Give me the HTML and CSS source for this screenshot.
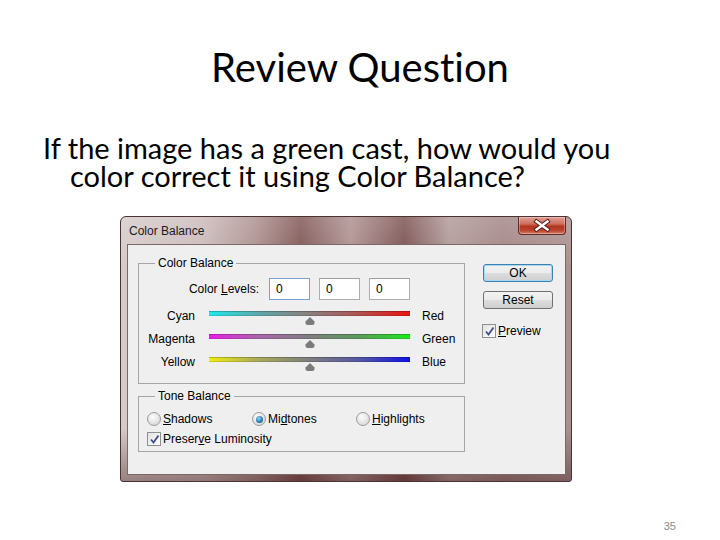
FILE: index.html
```html
<!DOCTYPE html>
<html lang="en">
<head>
  <meta charset="UTF-8">
  <meta name="viewport" content="width=device-width, initial-scale=1.0">
  <title>Review Question</title>
  <link rel="stylesheet" href="styles.css">
</head>
<body>
<div class="slide">
  <!-- Slide heading -->
  <h1 class="slide-title">Review Question</h1>
  <p class="question">If the image has a green cast, how would you color correct it using Color Balance?</p>

  <!-- Color Balance dialog -->
  <div class="dialog">
    <div class="titlebar">
      <span class="caption">Color Balance</span>
      <span class="close-btn">
        <svg width="46" height="17" viewBox="0 0 46 17">
          <path d="M17.5 4.5 L28.5 12.5 M28.5 4.5 L17.5 12.5" stroke="#5a1a14" stroke-width="4.4" stroke-linecap="square"/>
          <path d="M17.5 4.5 L28.5 12.5 M28.5 4.5 L17.5 12.5" stroke="#ffffff" stroke-width="2.4" stroke-linecap="square"/>
        </svg>
      </span>
    </div>

    <div class="client">
      <div class="groups">
        <fieldset class="group color-group">
          <legend>Color Balance</legend>
          <div class="levels">
            <span class="levels-label">Color <u>L</u>evels:</span>
            <input class="field focused" type="text" value="0" readonly>
            <input class="field" type="text" value="0" readonly>
            <input class="field" type="text" value="0" readonly>
          </div>

          <div class="slider-row">
            <span class="from">Cyan</span>
            <div class="slider">
              <div class="track cyan-red"></div>
              <svg class="thumb" width="10" height="8" viewBox="0 0 10 8"><path d="M5 0 L9.5 4.5 Q10 8 7 8 H3 Q0 8 0.5 4.5 Z" fill="#7b7b7b"/></svg>
            </div>
            <span class="to">Red</span>
          </div>
          <div class="slider-row">
            <span class="from">Magenta</span>
            <div class="slider">
              <div class="track magenta-green"></div>
              <svg class="thumb" width="10" height="8" viewBox="0 0 10 8"><path d="M5 0 L9.5 4.5 Q10 8 7 8 H3 Q0 8 0.5 4.5 Z" fill="#7b7b7b"/></svg>
            </div>
            <span class="to">Green</span>
          </div>
          <div class="slider-row">
            <span class="from">Yellow</span>
            <div class="slider">
              <div class="track yellow-blue"></div>
              <svg class="thumb" width="10" height="8" viewBox="0 0 10 8"><path d="M5 0 L9.5 4.5 Q10 8 7 8 H3 Q0 8 0.5 4.5 Z" fill="#7b7b7b"/></svg>
            </div>
            <span class="to">Blue</span>
          </div>
        </fieldset>

        <fieldset class="group tone-group">
          <legend>Tone Balance</legend>
          <div class="radios">
            <span class="option"><span class="radio"></span><span><u>S</u>hadows</span></span>
            <span class="option"><span class="radio on"></span><span>Mi<u>d</u>tones</span></span>
            <span class="option"><span class="radio"></span><span><u>H</u>ighlights</span></span>
          </div>
          <span class="option">
            <span class="check"><svg width="11" height="11" viewBox="0 0 11 11"><path d="M2 5.5 L4.5 8.5 L9.5 1.5" fill="none" stroke="#3d4f8a" stroke-width="1.8"/></svg></span>
            <span>Preser<u>v</u>e Luminosity</span>
          </span>
        </fieldset>
      </div>

      <div class="side">
        <button class="btn default">OK</button>
        <button class="btn">Reset</button>
        <span class="option preview">
          <span class="check"><svg width="11" height="11" viewBox="0 0 11 11"><path d="M2 5.5 L4.5 8.5 L9.5 1.5" fill="none" stroke="#3d4f8a" stroke-width="1.8"/></svg></span>
          <span><u>P</u>review</span>
        </span>
      </div>
    </div>
  </div>

  <div class="page-num">35</div>
</div>
</body>
</html>
```

FILE: styles.css
```css
body {
    margin: 0;
    padding: 0;
    background: #ffffff;
}

/* slide */
.slide {
    width: 720px;
    height: 540px;
    overflow: hidden;
    font-family: Lato, "Open Sans", sans-serif;
    font-variant-ligatures: none;
    color: #000;
}

.slide-title {
    margin: 0;
    padding-top: 43px;
    font-size: 40px;
    font-weight: 400;
    line-height: 48px;
    text-align: center;
}

.question {
    margin: 43px 0 0 0;
    padding: 0 50px 0 70px;
    text-indent: -27px;
    font-size: 29px;
    line-height: 28px;
}

/* dialog window */
.dialog {
    box-sizing: border-box;
    width: 452px;
    margin: 26px 0 0 120px;
    padding: 0 5px 6px 6px;
    border: 1px solid #4a3333;
    border-radius: 6px 6px 3px 3px;
    font-family: "Liberation Sans", Arial, sans-serif;
    font-size: 12px;
    color: #000;
    background:
        linear-gradient(180deg, rgba(255,255,255,0.18) 0%, rgba(0,0,0,0) 20%, rgba(0,0,0,0) 80%, rgba(60,20,20,0.4) 100%),
        linear-gradient(90deg, #d6caca 0%, #cbbaba 18%, #ab8e8e 30%, #7e5554 40%, #ad9090 51%, #7a5050 63%, #b09898 73%, #a28484 85%, #ab9090 100%);
}

.titlebar {
    height: 27px;
    display: flex;
    justify-content: space-between;
    align-items: flex-start;
    padding-left: 2px;
}

.caption {
    margin-top: 7px;
    line-height: 14px;
    color: #1a1a1a;
}

.close-btn {
    display: block;
    width: 46px;
    height: 17px;
    border: 1px solid #5e2a24;
    border-top: none;
    border-radius: 0 0 4px 4px;
    background: linear-gradient(180deg, #e0a094 0%, #cf705e 40%, #b3341f 55%, #bb4630 80%, #d4806a 100%);
    box-shadow: inset 0 0 0 1px rgba(255,255,255,0.3);
}

.close-btn svg {
    display: block;
}

.client {
    display: flex;
    height: 218px;
    padding: 11px 12px 0 10px;
    border: 1px solid #7d6666;
    background: #efefef;
}

.groups {
    width: 327px;
}

/* group boxes */
.group {
    margin: 0;
    padding: 0;
    border: 1px solid #a6a6a6;
    min-width: 0;
}

.group legend {
    margin-left: 16px;
    padding: 0 3px;
    line-height: 14px;
}

.color-group {
    padding-bottom: 5px;
}

.levels {
    display: grid;
    grid-template-columns: 121px 41px 41px 41px;
    column-gap: 9px;
    align-items: center;
    margin-top: 8px;
    margin-bottom: 9px;
}

.levels-label {
    text-align: right;
    padding-right: 1px;
}

.field {
    box-sizing: border-box;
    width: 41px;
    height: 22px;
    margin: 0;
    padding: 0 0 0 6px;
    border: 1px solid #abadb3;
    border-top-color: #9ea0a6;
    background: #fff;
    font-family: "Liberation Sans", Arial, sans-serif;
    font-size: 12px;
    color: #000;
    outline: none;
}

.field.focused {
    border-color: #7da2ce;
}

/* sliders */
.slider-row {
    display: flex;
    align-items: flex-start;
    height: 23px;
}

.from {
    width: 56px;
    text-align: right;
    line-height: 14px;
}

.to {
    line-height: 14px;
}

.slider {
    width: 201px;
    margin: 2px 12px 0 14px;
    display: flex;
    flex-direction: column;
    align-items: center;
}

.track {
    width: 100%;
    height: 5px;
    box-shadow: inset 0 1px rgba(0,0,0,0.22), inset 0 -1px rgba(0,0,0,0.12);
}

.cyan-red {
    background: linear-gradient(90deg, #1ee8ec 0%, #5fa6a8 25%, #8a7e7e 50%, #b05050 75%, #ee1010 100%);
}

.magenta-green {
    background: linear-gradient(90deg, #e81ee6 0%, #a866a8 25%, #7e7e80 50%, #5c9a5c 75%, #1aea1a 100%);
}

.yellow-blue {
    background: linear-gradient(90deg, #eeee14 0%, #a8a85c 25%, #7e7e80 50%, #5656a4 75%, #1010e6 100%);
}

.thumb {
    display: block;
    margin-top: 1px;
}

/* tone balance */
.tone-group {
    margin-top: 5px;
    padding: 8px 0 4px 8px;
}

.tone-group legend {
    margin-left: 8px;
}

.radios {
    display: grid;
    grid-template-columns: 105px 104px auto;
    margin-bottom: 4px;
}

.option {
    display: flex;
    align-items: center;
    gap: 2px;
    height: 16px;
    line-height: 14px;
}

.radio {
    box-sizing: border-box;
    width: 14px;
    height: 14px;
    border-radius: 50%;
    border: 1px solid #9a9a9a;
    background: radial-gradient(circle at 40% 35%, #fdfdfd 0%, #e4e4e4 55%, #cfcfcf 100%);
    display: flex;
    align-items: center;
    justify-content: center;
}

.radio.on::after {
    content: "";
    width: 7px;
    height: 7px;
    border-radius: 50%;
    background: radial-gradient(circle at 40% 35%, #9ad6f0 0%, #2e86b8 50%, #134c72 100%);
}

.check {
    box-sizing: border-box;
    width: 14px;
    height: 14px;
    border: 1px solid #8e8f8f;
    background: linear-gradient(135deg, #e2e2e2, #ffffff);
    display: flex;
    align-items: center;
    justify-content: center;
}

/* buttons column */
.side {
    width: 70px;
    margin-left: 18px;
    padding-top: 8px;
    display: flex;
    flex-direction: column;
}

.btn {
    box-sizing: border-box;
    width: 70px;
    height: 18px;
    padding: 0;
    border: 1px solid #707070;
    border-radius: 3px;
    background: linear-gradient(180deg, #f2f2f2 0%, #ebebeb 50%, #dddddd 51%, #cfcfcf 100%);
    font-family: "Liberation Sans", Arial, sans-serif;
    font-size: 12px;
    color: #000;
    line-height: 14px;
}

.btn.default {
    border-color: #3c7fb1;
    box-shadow: inset 0 0 0 1px #a6d8f3;
}

.btn + .btn {
    margin-top: 9px;
}

.preview {
    margin-top: 14px;
    margin-left: -1px;
}

/* page number */
.page-num {
    margin-top: 37px;
    padding-right: 44px;
    text-align: right;
    font-family: "Liberation Sans", Arial, sans-serif;
    font-size: 11px;
    line-height: 14px;
    color: #8b8b8b;
}
```
